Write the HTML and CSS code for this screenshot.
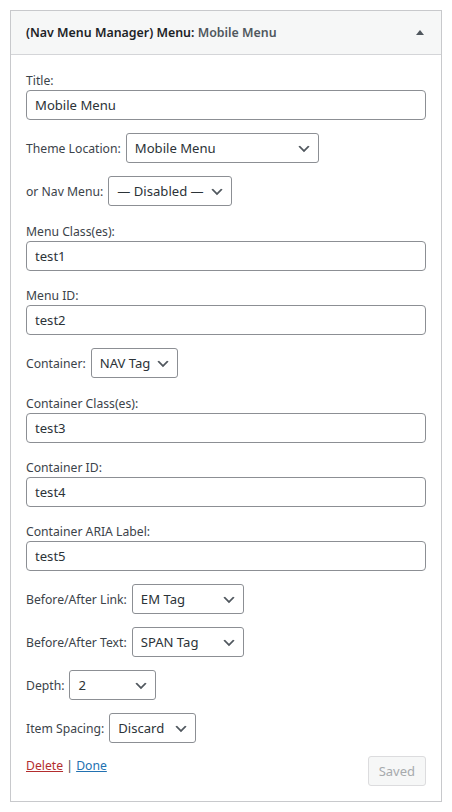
FILE: index.html
```html
<!DOCTYPE html>
<html lang="en">
<head>
<meta charset="utf-8">
<title>Nav Menu Manager widget</title>
<link rel="stylesheet" href="styles.css">
</head>
<body>
<div class="widget">
  <div class="widget-top">
    <h3 class="widget-title">(Nav Menu Manager) Menu: <span class="in-title">Mobile Menu</span></h3>
    <span class="toggle" aria-hidden="true"></span>
  </div>
  <div class="widget-inside">
    <div class="field">
      <label class="block-label">Title:</label>
      <input class="text-input" type="text" value="Mobile Menu">
    </div>
    <div class="field inline">
      <label>Theme Location:</label>
      <select class="sel sel-theme"><option>Mobile Menu</option></select>
    </div>
    <div class="field inline">
      <label>or Nav Menu:</label>
      <select class="sel sel-nav"><option>— Disabled —</option></select>
    </div>
    <div class="field">
      <label class="block-label">Menu Class(es):</label>
      <input class="text-input" type="text" value="test1">
    </div>
    <div class="field">
      <label class="block-label">Menu ID:</label>
      <input class="text-input" type="text" value="test2">
    </div>
    <div class="field inline">
      <label>Container:</label>
      <select class="sel sel-small"><option>NAV Tag</option></select>
    </div>
    <div class="field">
      <label class="block-label">Container Class(es):</label>
      <input class="text-input" type="text" value="test3">
    </div>
    <div class="field">
      <label class="block-label">Container ID:</label>
      <input class="text-input" type="text" value="test4">
    </div>
    <div class="field">
      <label class="block-label">Container ARIA Label:</label>
      <input class="text-input" type="text" value="test5">
    </div>
    <div class="field inline">
      <label>Before/After Link:</label>
      <select class="sel sel-tag"><option>EM Tag</option></select>
    </div>
    <div class="field inline">
      <label>Before/After Text:</label>
      <select class="sel sel-tag"><option>SPAN Tag</option></select>
    </div>
    <div class="field inline">
      <label>Depth:</label>
      <select class="sel sel-small"><option>2</option></select>
    </div>
    <div class="field inline">
      <label>Item Spacing:</label>
      <select class="sel sel-small"><option>Discard</option></select>
    </div>
    <div class="actions">
      <div class="links"><a href="#" class="delete">Delete</a> | <a href="#" class="done">Done</a></div>
      <button class="saved" type="button" disabled>Saved</button>
    </div>
  </div>
</div>
</body>
</html>
```

FILE: styles.css
```css
* { box-sizing: border-box; }

body {
  margin: 0;
  padding: 10px;
  background: #fff;
  font-family: "Noto Sans", "Open Sans", sans-serif;
  font-size: 12.2px;
  color: #3c434a;
}

.widget {
  width: 432px;
  border: 1px solid #c8c9cc;
  background: #fff;
}

.widget-top {
  height: 44px;
  background: #f6f7f7;
  border-bottom: 1px solid #d4d5d8;
  display: flex;
  align-items: center;
  justify-content: space-between;
  padding: 0 17px 0 15px;
}

.widget-title {
  margin: 0;
  font-size: 12.4px;
  font-weight: 600;
  color: #1d2327;
  line-height: 18px;
}

.in-title {
  color: #50575e;
}

.toggle {
  width: 0;
  height: 0;
  border-left: 4px solid transparent;
  border-right: 4px solid transparent;
  border-bottom: 5px solid #50575e;
  margin-top: -1px;
}

.widget-inside {
  padding: 14px 15px 15px;
}

.field {
  margin-bottom: 13px;
}

.block-label {
  display: block;
  line-height: 19px;
  padding-top: 2.4px;
}

.text-input {
  display: block;
  width: 100%;
  height: 30px;
  margin: 0;
  padding: 0 8px;
  border: 1px solid #8c8f94;
  border-radius: 4px;
  font-family: inherit;
  font-size: 13.1px;
  color: #2c3338;
  background: #fff;
}

.inline {
  display: flex;
  align-items: center;
  gap: 5px;
  height: 30px;
}

.sel {
  -webkit-appearance: none;
  appearance: none;
  height: 30px;
  margin: 0;
  padding: 0 24px 0 8px;
  border: 1px solid #8c8f94;
  border-radius: 3px;
  font-family: inherit;
  font-size: 13.1px;
  color: #2c3338;
  background: #fff url("data:image/svg+xml;charset=utf-8,%3Csvg xmlns='http://www.w3.org/2000/svg' width='20' height='20' viewBox='0 0 20 20'%3E%3Cpath d='M5 6l5 5 5-5 2 1-7 7-7-7 2-1z' fill='%2350575e'/%3E%3C/svg%3E") no-repeat right 6px top 55%;
  background-size: 16px 16px;
}

.sel-theme { width: 193px; }
.sel-nav { width: 124px; }
.sel-small { width: 87px; }
.sel-tag { width: 112px; }

.actions {
  display: flex;
  justify-content: space-between;
  align-items: flex-start;
}

.links {
  line-height: 19px;
  color: #3c434a;
}

.delete { color: #b32d2e; }
.done { color: #2271b1; }

.saved {
  height: 30px;
  padding: 0 10px;
  margin: 0;
  border: 1px solid #dcdcde;
  border-radius: 3px;
  background: #f6f7f7;
  color: #a7aaad;
  font-family: inherit;
  font-size: 13px;
}
```
